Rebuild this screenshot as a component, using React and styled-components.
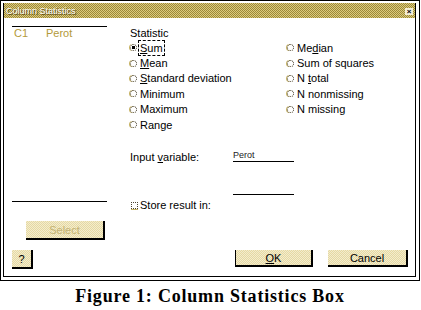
import React from 'react';
import styled, { createGlobalStyle } from 'styled-components';

const GlobalStyle = createGlobalStyle`
  body {
    margin: 0;
    background: #fff;
  }
`;

const dither = (a, b) => `repeating-conic-gradient(${a} 0 25%, ${b} 0 50%) 0 0 / 2px 2px`;

const Page = styled.div`
  width: 421px;
  height: 310px;
  font-family: "Liberation Sans", Arial, sans-serif;
  font-size: 11px;
  color: #000;
`;

const Frame = styled.div`
  box-sizing: border-box;
  width: 420px;
  height: 281px;
  border: 1px solid #000;
  padding: 2px 3px 3px 2px;
`;

const Window = styled.div`
  box-sizing: border-box;
  height: 100%;
  border: 1px solid #000;
  border-top: none;
  display: flex;
  flex-direction: column;
`;

const TitleBar = styled.div`
  height: 15px;
  background: ${dither('#9c883a', '#dccb7c')};
  display: flex;
  align-items: center;
  justify-content: space-between;
  padding: 0 2px 0 2px;
`;

const TitleText = styled.span`
  color: #fff;
  font-size: 9px;
  line-height: 11px;
  padding-top: 1px;
  text-shadow: 1px 1px 0 #5a4a10;
`;

const CloseBox = styled.span`
  width: 8px;
  height: 7px;
  margin-top: 1px;
  background: #f4eed8;
  display: flex;
  align-items: center;
  justify-content: center;
  font-size: 8px;
  line-height: 7px;
  font-weight: bold;
`;

const Body = styled.div`
  flex: 1;
  display: flex;
  padding: 8px 0 0 8px;
`;

const LeftColumn = styled.div`
  width: 95px;
  display: flex;
  flex-direction: column;
`;

const ListBox = styled.div`
  box-sizing: border-box;
  height: 176px;
  border-top: 1px solid #000;
  border-bottom: 1px solid #000;
`;

const ListRow = styled.div`
  display: flex;
  color: #b39a3a;
  line-height: 11px;
  padding-top: 1px;
`;

const ListCell = styled.span`
  width: ${p => p.$w || 'auto'};
  padding-left: ${p => p.$pad || 0};
`;

const Button = styled.div`
  box-sizing: border-box;
  width: ${p => p.$w};
  height: ${p => p.$h || '19px'};
  background: ${dither('#e6d9a2', '#f3ecce')};
  border-right: 2px solid #000;
  border-bottom: 2px solid #000;
  border-left: ${p => (p.$default ? '1px solid #000' : 'none')};
  display: flex;
  align-items: center;
  justify-content: center;
  color: ${p => (p.$disabled ? '#c3b272' : '#000')};
  line-height: 12px;
`;

const SelectButton = styled(Button)`
  margin: 19px 0 0 14px;
`;

const RightColumn = styled.div`
  margin-left: 23px;
  display: flex;
  flex-direction: column;
`;

const Label = styled.div`
  line-height: 14px;
`;

const RadioGrid = styled.div`
  display: grid;
  grid-template-columns: 157px auto;
  grid-template-rows: repeat(6, 15.4px);
  grid-auto-flow: column;
`;

const RadioItem = styled.label`
  display: flex;
  align-items: center;
  line-height: 14px;
  white-space: nowrap;
`;

const RadioDot = styled.span`
  box-sizing: border-box;
  width: 7px;
  height: 7px;
  border-radius: 50%;
  border: 1px dotted #4a4230;
  background: ${p => (p.$on ? 'radial-gradient(circle, #000 0 1.5px, #fff 2px)' : '#fff')};
  box-shadow: -1px 0 0 #c8b466;
  margin-right: 3px;
  flex-shrink: 0;
`;

const Focus = styled.span`
  outline: 1px dashed #000;
  margin-left: -1px;
  padding: 0 1px;
`;

const InputRow = styled.div`
  display: flex;
  margin-top: 17px;
`;

const InputLabel = styled.div`
  width: 103px;
  line-height: 14px;
  padding-top: 1px;
`;

const Field = styled.div`
  width: 61px;
  height: ${p => p.$h};
  border-bottom: 1px solid #000;
  font-size: 9px;
  line-height: 12px;
  color: #222;
  margin-left: ${p => p.$indent || 0};
`;

const CheckRow = styled.label`
  display: flex;
  align-items: center;
  line-height: 14px;
  margin-top: 3px;
  margin-left: 1px;
`;

const CheckBox = styled.span`
  box-sizing: border-box;
  width: 7px;
  height: 7px;
  border: 1px dotted #4a4230;
  box-shadow: 0 1px 0 #c8b466;
  margin-right: 2px;
`;

const Footer = styled.div`
  display: flex;
  align-items: flex-start;
  padding: 0 7px 7px 8px;
  gap: 15px;
`;

const Spacer = styled.div`
  flex: 1;
`;

const Caption = styled.div`
  width: 420px;
  margin-top: 5px;
  text-align: center;
  font-family: "Liberation Serif", "Times New Roman", serif;
  font-weight: bold;
  font-size: 18px;
  letter-spacing: 0.8px;
`;

const leftStats = [
  { key: 'sum', label: <><u>S</u>um</>, on: true },
  { key: 'mean', label: <><u>M</u>ean</> },
  { key: 'sd', label: <><u>S</u>tandard deviation</> },
  { key: 'min', label: 'Minimum' },
  { key: 'max', label: 'Maximum' },
  { key: 'range', label: 'Range' },
];

const rightStats = [
  { key: 'median', label: <>Me<u>d</u>ian</> },
  { key: 'ss', label: 'Sum of squares' },
  { key: 'nt', label: <>N <u>t</u>otal</> },
  { key: 'nn', label: 'N nonmissing' },
  { key: 'nm', label: 'N missing' },
];

const App = () => {
  return (
    <Page>
      <GlobalStyle />
      <Frame>
        <Window>
          <TitleBar>
            <TitleText>Column Statistics</TitleText>
            <CloseBox>×</CloseBox>
          </TitleBar>
          <Body>
            <LeftColumn>
              <ListBox>
                <ListRow>
                  <ListCell $w="32px" $pad="2px">C1</ListCell>
                  <ListCell>Perot</ListCell>
                </ListRow>
              </ListBox>
              <SelectButton $w="79px" $disabled>Select</SelectButton>
            </LeftColumn>
            <RightColumn>
              <Label>Statistic</Label>
              <RadioGrid>
                {leftStats.map(s => (
                  <RadioItem key={s.key}>
                    <RadioDot $on={s.on} />
                    {s.on ? <Focus>{s.label}</Focus> : <span>{s.label}</span>}
                  </RadioItem>
                ))}
                {rightStats.map(s => (
                  <RadioItem key={s.key}>
                    <RadioDot />
                    <span>{s.label}</span>
                  </RadioItem>
                ))}
              </RadioGrid>
              <InputRow>
                <InputLabel>Input <u>v</u>ariable:</InputLabel>
                <Field $h="12px">Perot</Field>
              </InputRow>
              <Field $h="30px" $indent="103px" />
              <CheckRow>
                <CheckBox />
                <span>Store result in:</span>
              </CheckRow>
            </RightColumn>
          </Body>
          <Footer>
            <Button $w="21px">?</Button>
            <Spacer />
            <Button $w="78px" $h="17px" $default><u>O</u>K</Button>
            <Button $w="80px" $h="17px">Cancel</Button>
          </Footer>
        </Window>
      </Frame>
      <Caption>Figure 1: Column Statistics Box</Caption>
    </Page>
  );
};

export default App;
